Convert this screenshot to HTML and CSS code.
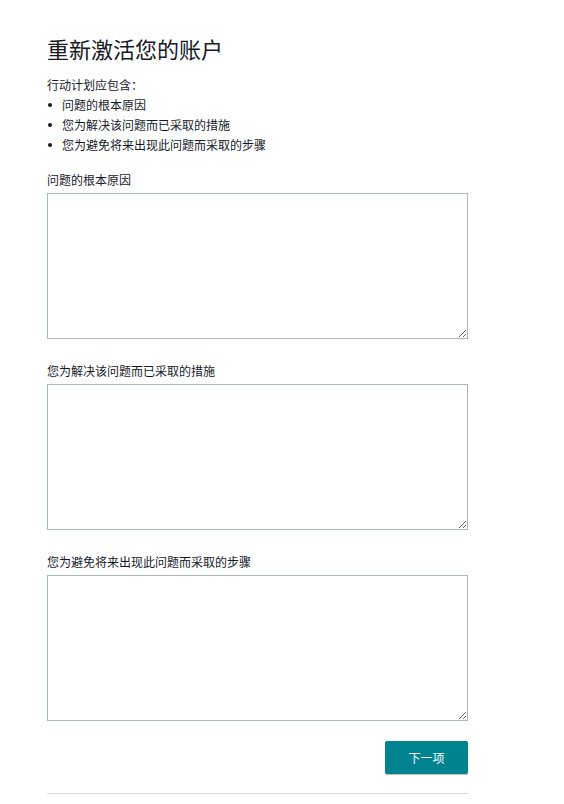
FILE: index.html
```html
<!DOCTYPE html>
<html lang="zh-CN">
<head>
<meta charset="utf-8">
<title>重新激活您的账户</title>
<link rel="stylesheet" href="styles.css">
</head>
<body>
<main class="page">
  <h1 class="title">重新激活您的账户</h1>
  <div class="intro">
    <p class="intro-lead">行动计划应包含：</p>
    <ul class="intro-list">
      <li>问题的根本原因</li>
      <li>您为解决该问题而已采取的措施</li>
      <li>您为避免将来出现此问题而采取的步骤</li>
    </ul>
  </div>
  <form class="form">
    <div class="field">
      <label class="field-label" for="f1">问题的根本原因</label>
      <textarea class="field-input" id="f1"></textarea>
    </div>
    <div class="field">
      <label class="field-label" for="f2">您为解决该问题而已采取的措施</label>
      <textarea class="field-input" id="f2"></textarea>
    </div>
    <div class="field">
      <label class="field-label" for="f3">您为避免将来出现此问题而采取的步骤</label>
      <textarea class="field-input" id="f3"></textarea>
    </div>
    <div class="actions">
      <button type="button" class="btn-primary">下一项</button>
    </div>
  </form>
  <hr class="divider">
</main>
</body>
</html>
```

FILE: styles.css
```css
html, body {
  margin: 0;
  padding: 0;
  background: #ffffff;
}

body {
  font-family: "Noto Sans CJK SC", "Noto Sans", "Liberation Sans", sans-serif;
  color: #16191f;
  font-size: 12px;
}

.page {
  width: 421px;
  margin-left: 47px;
  padding-top: 34px;
}

.title {
  margin: 0;
  font-size: 22px;
  font-weight: 400;
  line-height: 28px;
  color: #16191f;
}

.intro {
  margin-top: 13px;
  line-height: 20px;
}

.intro-lead {
  margin: 0;
}

.intro-list {
  margin: 0;
  padding: 0;
  list-style: none;
}

.intro-list li {
  position: relative;
  padding-left: 15px;
}

.intro-list li::before {
  content: "";
  position: absolute;
  left: 1px;
  top: 8px;
  width: 4px;
  height: 4px;
  border-radius: 50%;
  background: #16191f;
}

.form {
  margin-top: 15px;
  display: flex;
  flex-direction: column;
  gap: 22px;
}

.field {
  display: flex;
  flex-direction: column;
  gap: 3px;
}

.field-label {
  line-height: 20px;
}

.field-input {
  display: block;
  box-sizing: border-box;
  width: 421px;
  height: 146px;
  margin: 0;
  border: 1px solid #aab7b8;
  border-radius: 0;
  font-family: inherit;
  font-size: 12px;
  padding: 4px 8px;
  resize: vertical;
}

.actions {
  display: flex;
  justify-content: flex-end;
  margin-top: -2px;
}

.btn-primary {
  width: 83px;
  height: 33px;
  border: none;
  border-radius: 2px;
  background: #00838f;
  color: #ffffff;
  font-family: inherit;
  font-size: 12px;
  box-shadow: 0 1px 1px rgba(0, 28, 36, 0.3);
  cursor: pointer;
}

.divider {
  margin: 19px 0 0;
  border: none;
  border-top: 1px solid #d5dbdb;
  height: 0;
}
```
